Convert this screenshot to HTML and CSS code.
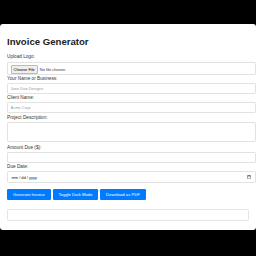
FILE: index.html
```html
<!DOCTYPE html>
<html lang="en">
<head>
    <meta charset="UTF-8">
    <meta name="viewport" content="width=device-width, initial-scale=1.0">
    <title>Invoice Generator</title>
    <link rel="stylesheet" href="styles.css">
</head>
<body>
    <!-- Invoice form card -->
    <div class="container">
        <h1>Invoice Generator</h1>

        <label for="logo">Upload Logo:</label>
        <input type="file" id="logo" class="file-input">

        <label for="from">Your Name or Business:</label>
        <input type="text" id="from" placeholder="Jane Doe Designs">

        <label for="client">Client Name:</label>
        <input type="text" id="client" placeholder="Acme Corp">

        <label for="desc">Project Description:</label>
        <textarea id="desc"></textarea>

        <label for="amount">Amount Due ($):</label>
        <input type="number" id="amount">

        <label for="due">Due Date:</label>
        <input type="date" id="due" class="date-input">

        <div class="buttons">
            <button>Generate Invoice</button>
            <button>Toggle Dark Mode</button>
            <button>Download as PDF</button>
        </div>

        <div class="output"></div>
    </div>
</body>
</html>
```

FILE: styles.css
```css
* {
    box-sizing: border-box;
    font-family: "Liberation Sans", Arial, Helvetica, sans-serif;
}

body {
    margin: 0;
    background-color: #000;
    height: 100vh;
    overflow: hidden;
}

/* Card */
.container {
    margin-top: 24px;
    height: 206px;
    background-color: #fff;
    border-radius: 3px;
    box-shadow: 0 0 1px rgba(0, 0, 0, 0.25);
    padding: 7px 7px 6px;
}

h1 {
    font-size: 9.6px;
    font-weight: bold;
    color: #222;
    margin: 5.2px 0 7.1px;
}

label {
    display: block;
    font-size: 4.7px;
    color: #333;
    margin-bottom: 2.3px;
}

input,
textarea {
    display: block;
    width: calc(100% + 7px);
    height: 11px;
    padding: 0 2.5px;
    border: 1px solid #e2e2e2;
    border-radius: 1.2px;
    font-size: 4px;
    color: #333;
    margin: 0 0 1.3px;
    background-color: #fff;
}

input::placeholder {
    color: #9a9a9a;
}

.file-input {
    height: 13px;
    padding: 2px 2.5px;
    margin-bottom: 1px;
}

.file-input::file-selector-button {
    font-size: 4px;
    padding: 1px 2px;
    margin-right: 2px;
    border: 1px solid #bbb;
    border-radius: 1px;
    background-color: #efefef;
}

textarea {
    height: 20px;
    margin-bottom: 2.5px;
    resize: none;
}

.date-input {
    height: 12px;
    color: #222;
}

.buttons {
    display: flex;
    gap: 1.6px;
    margin-top: 6px;
}

button {
    background-color: #007bff;
    color: #fff;
    border: none;
    border-radius: 1.2px;
    font-size: 4.2px;
    padding: 3px 6px;
    height: 11px;
    cursor: pointer;
}

.output {
    margin-top: 9px;
    height: 12px;
    border: 1px solid #e6e6e6;
    border-radius: 1.2px;
}
```
